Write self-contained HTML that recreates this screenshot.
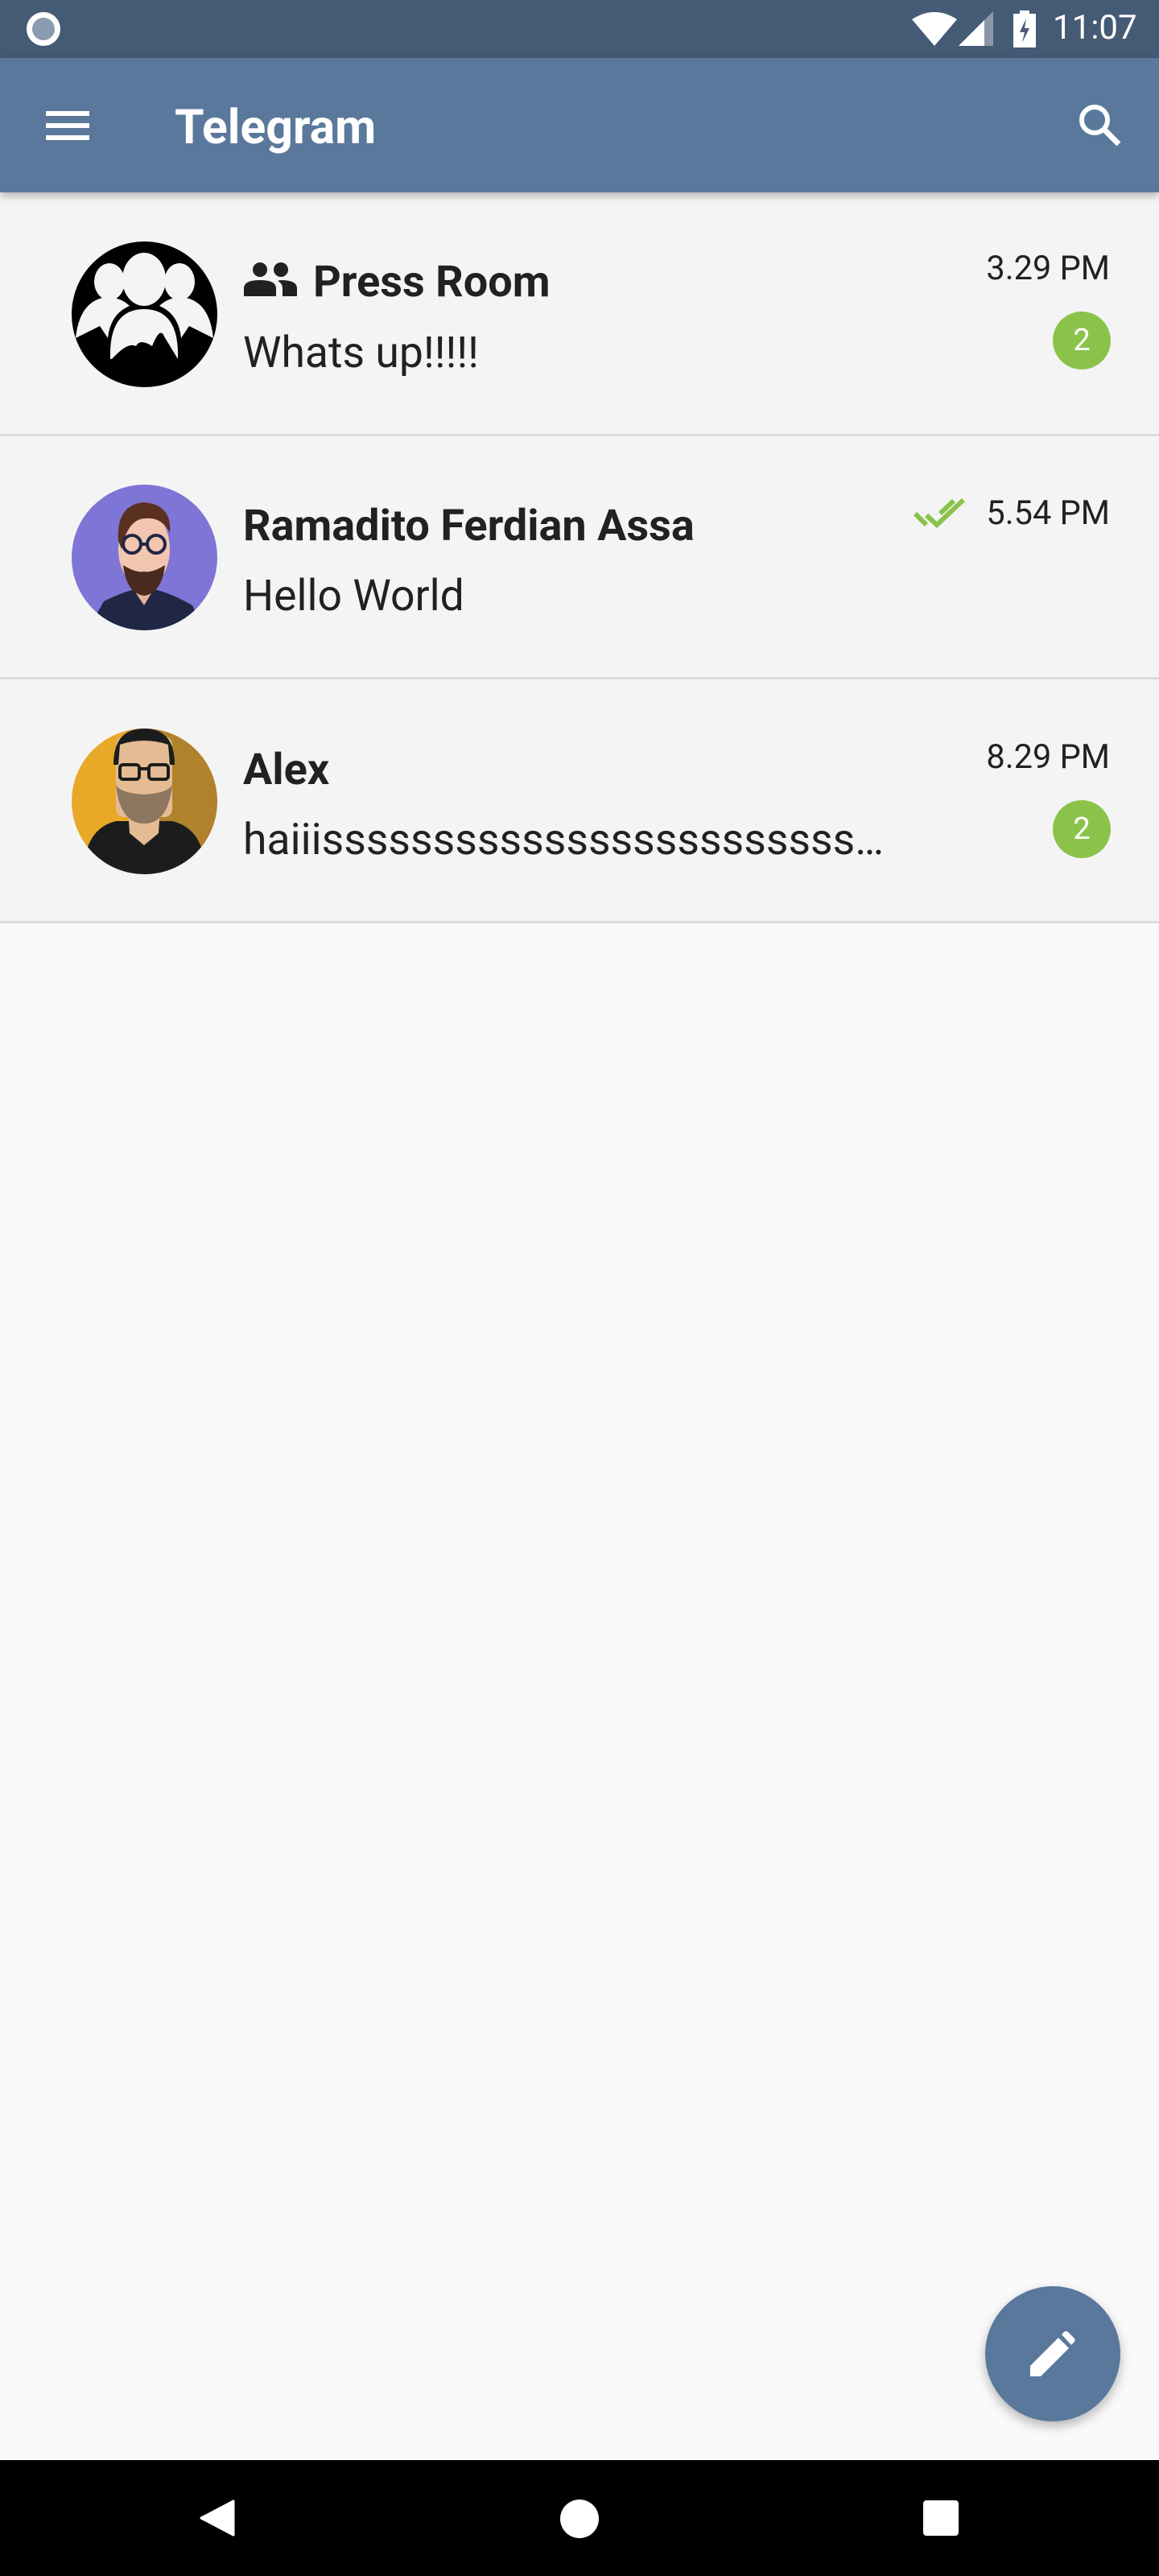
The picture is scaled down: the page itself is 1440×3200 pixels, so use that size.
<!DOCTYPE html>
<html><head><meta charset="utf-8"><style>
*{margin:0;padding:0;box-sizing:border-box}
body{width:1440px;height:3200px;background:#fafafa;font-family:"Roboto","Liberation Sans",sans-serif;position:relative;overflow:hidden;color:#212121}
.a{position:absolute}
.sb{left:0;top:0;width:1440px;height:72px;background:#445a75}
.ab{left:0;top:72px;width:1440px;height:167px;background:#5a789b;box-shadow:0 4px 10px rgba(0,0,0,.28);z-index:2}
.row{left:0;width:1440px;height:301px;background:#f4f4f4;border-bottom:3px solid #dcdcdc}
.nm{font-weight:bold;font-size:54px;left:302px;line-height:1;white-space:nowrap}
.msg{font-size:53.5px;left:302px;line-height:1;white-space:nowrap;color:#212121}
.tm{font-size:41.5px;right:61px;line-height:1;color:#212121}
.bd{width:72px;height:72px;border-radius:50%;background:#8bc34a;color:#fff;font-size:38px;text-align:center;line-height:72px;left:1308px}
.av{left:89px;width:181px;height:181px;border-radius:50%;overflow:hidden}
</style></head><body>
<div class="a sb">
 <div class="a" style="left:33px;top:15px;width:42px;height:42px;border-radius:50%;border:7px solid #fff;background:#8a9ab0"></div>
 <svg class="a" style="left:1133px;top:14px" width="56" height="44" viewBox="0 0 56 44"><path d="M0 10 Q28 -8 56 10 L28 43 Z" fill="#fff"/></svg>
 <svg class="a" style="left:1191px;top:14px" width="44" height="44"><path d="M0 43 L43 0 V43 Z" fill="#8a97aa"/><path d="M0 43 L32 11 V43 Z" fill="#fff"/></svg>
 <svg class="a" style="left:1259px;top:13px" width="28" height="46"><rect x="8" y="0" width="12" height="5" fill="#fff"/><rect x="0" y="4" width="28" height="42" fill="#fff"/><path d="M16 10 L8 27 H14 L11 40 L20 22 H14 Z" fill="#445a75"/></svg>
 <div class="a" style="left:1308px;top:14px;font-size:42px;color:#fff;line-height:1">11:07</div>
</div>
<div class="a ab">
 <div class="a" style="left:57px;top:66px;width:54px;height:6px;background:#fff"></div>
 <div class="a" style="left:57px;top:81px;width:54px;height:6px;background:#fff"></div>
 <div class="a" style="left:57px;top:96px;width:54px;height:6px;background:#fff"></div>
 <div class="a" style="left:217px;top:57px;font-size:59px;font-weight:bold;color:#fff;line-height:1">Telegram</div>
 <svg class="a" style="left:1338px;top:55px" width="58" height="58" viewBox="0 0 58 58"><circle cx="22" cy="22" r="16" fill="none" stroke="#fff" stroke-width="6"/><path d="M33 33 L52 52" stroke="#fff" stroke-width="7"/></svg>
</div>

<div class="a row" style="top:239px;height:303px"></div>
<div class="a row" style="top:542px;height:302px"></div>
<div class="a row" style="top:844px;height:303px"></div>

<!-- row1 -->
<div class="a av" style="top:300px;background:#000">
 <svg width="181" height="181" viewBox="0 0 181 181"><g fill="#f4f4f4">
 <ellipse cx="47" cy="50" rx="19" ry="23"/><ellipse cx="134" cy="50" rx="19" ry="23"/><ellipse cx="90" cy="47" rx="27" ry="33"/>
 <path d="M5 120 Q10 72 45 69 Q62 70 72 80 Q48 90 45 120 L35 105 Z"/><path d="M176 120 Q171 72 136 69 Q119 70 109 80 Q133 90 136 120 L146 105 Z"/>
 <path d="M48 146 Q46 84 90 84 Q134 84 132 146 L115 118 Q110 105 100 130 Q85 120 80 130 Q70 124 50 146 Z"/></g></svg>
</div>
<svg class="a" style="left:303px;top:326px" width="66" height="42" viewBox="0 0 66 42"><g fill="#212121"><circle cx="20" cy="9" r="9"/><circle cx="46" cy="9" r="9"/><path d="M0 42 V32 Q0 22 20 22 Q40 22 40 32 V42 Z"/><path d="M46 22 Q66 22 66 32 V42 H48 V32 Q48 26 42 23 Q44 22 46 22Z"/></g></svg>
<div class="a nm" style="left:389px;top:324px">Press Room</div>
<div class="a msg" style="top:412px">Whats up!!!!!</div>
<div class="a tm" style="top:313px">3.29 PM</div>
<div class="a bd" style="top:387px">2</div>

<!-- row2 -->
<div class="a av" style="top:602px;background:#7e75d6">
 <svg width="181" height="181" viewBox="0 0 181 181">
 <path d="M20 181 L40 145 Q70 130 90 128 Q115 130 150 150 L165 181 Z" fill="#1f2745"/>
 <path d="M70 120 L90 150 L108 120 Z" fill="#e5b49c"/>
 <ellipse cx="90" cy="80" rx="32" ry="48" fill="#f3c6b0"/>
 <path d="M58 70 Q55 25 90 22 Q125 25 122 60 Q112 40 92 42 Q70 42 62 80 Z" fill="#5a3020"/>
 <path d="M64 100 Q68 135 90 138 Q112 135 116 100 Q100 110 90 108 Q80 110 64 100Z" fill="#4a2a1e"/>
 <g fill="none" stroke="#1f2745" stroke-width="4"><circle cx="75" cy="74" r="11"/><circle cx="105" cy="74" r="11"/><path d="M86 74 H94"/></g>
 </svg>
</div>
<div class="a nm" style="top:627px">Ramadito Ferdian Assa</div>
<div class="a msg" style="top:714px">Hello World</div>
<svg class="a" style="left:1135px;top:618px" width="66" height="38" viewBox="0 0 66 38"><g fill="none" stroke="#8bc34a" stroke-width="6"><path d="M2 20 L16 34"/><path d="M16 22 L29 34 L62 3"/><path d="M33 20 L50 4"/></g></svg>
<div class="a tm" style="top:617px">5.54 PM</div>

<!-- row3 -->
<div class="a av" style="top:905px;background:#e8a828">
 <svg width="181" height="181" viewBox="0 0 181 181">
 <path d="M90 0 H181 V181 H90 Z" fill="#b0822c"/>
 <path d="M15 181 Q15 125 55 115 L125 115 Q166 125 166 181 Z" fill="#1b1d1d"/>
 <path d="M70 100 L110 100 L108 130 L90 145 L72 130 Z" fill="#e5bb94"/>
 <rect x="55" y="10" width="70" height="100" rx="10" fill="#e5bb94"/>
 <path d="M55 70 Q60 118 90 118 Q120 118 125 70 Q120 80 90 82 Q60 80 55 70Z" fill="#8e7660"/>
 <path d="M52 45 Q52 0 90 0 Q128 0 128 45 L122 45 L120 20 Q90 10 60 20 L58 45 Z" fill="#1b1d1d"/>
 <g fill="none" stroke="#1b1d1d" stroke-width="4"><rect x="60" y="45" width="24" height="18" rx="4"/><rect x="96" y="45" width="24" height="18" rx="4"/><path d="M84 50 H96"/></g>
 </svg>
</div>
<div class="a nm" style="top:930px">Alex</div>
<div class="a msg" style="top:1017px">haiiissssssssssssssssssssssss…</div>
<div class="a tm" style="top:920px">8.29 PM</div>
<div class="a bd" style="top:994px">2</div>

<!-- FAB -->
<div class="a" style="left:1224px;top:2840px;width:168px;height:168px;border-radius:50%;background:#5a789b;box-shadow:0 6px 14px rgba(0,0,0,.28)">
 <svg class="a" style="left:56px;top:56px" width="56" height="56" viewBox="0 0 56 56"><path d="M0 43 L35 8 L48 21 L13 56 H0 Z" fill="#fff"/><path d="M39 4 L43 0 Q45 -1 47 1 L55 9 Q56 11 55 13 L51 17 Z" fill="#fff"/></svg>
</div>

<!-- nav -->
<div class="a" style="left:0;top:3056px;width:1440px;height:144px;background:#000">
 <svg class="a" style="left:246px;top:49px" width="46" height="46"><path d="M44 2 V44 L4 23 Z" fill="#fff" stroke="#fff" stroke-width="3" stroke-linejoin="round"/></svg>
 <div class="a" style="left:696px;top:49px;width:48px;height:48px;border-radius:50%;background:#fff"></div>
 <div class="a" style="left:1147px;top:50px;width:44px;height:44px;border-radius:4px;background:#fff"></div>
</div>
</body></html>
